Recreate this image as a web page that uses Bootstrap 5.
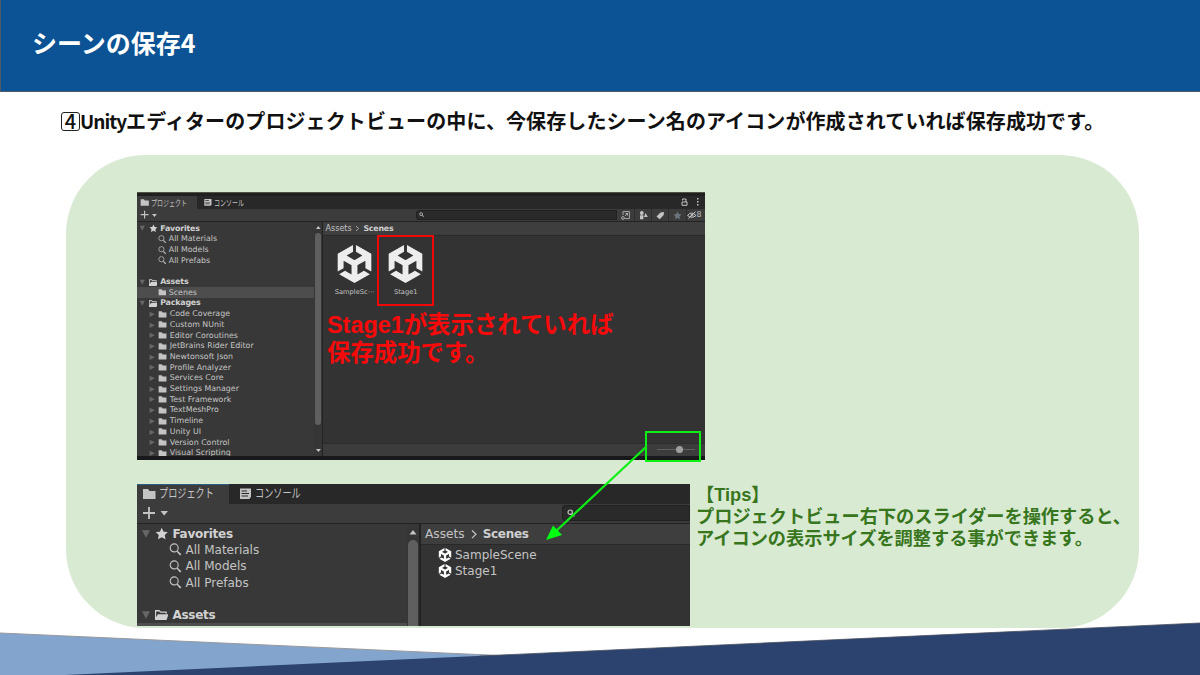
<!DOCTYPE html>
<html lang="ja">
<head>
<meta charset="utf-8">
<meta name="viewport" content="width=device-width, initial-scale=1">
<title>シーンの保存4</title>
<link rel="stylesheet" href="https://cdn.jsdelivr.net/npm/bootstrap@5.3.0/dist/css/bootstrap.min.css">
<style>
  body { width: 1200px; height: 675px; font-family: "Liberation Sans", "Noto Sans CJK JP", sans-serif; }
  svg { display: block; fill: currentColor; flex: none; }
  svg.hollow { fill: none; stroke: currentColor; }
  .topbar { height: 92px; background: #0b5394; border: 1px solid #4d5a68; border-width: 0 0 1px 1px; padding: 0 0 6px 31px; }
  .topbar h1 { font: 700 25px/1 "Noto Sans CJK JP", sans-serif; }
  .step { height: 63px; padding: 0 0 5px 61px; font: 700 20px/1 "Noto Sans CJK JP", sans-serif; letter-spacing: .1px; color: #111; white-space: nowrap; }
  .latin { font-size: 19px; letter-spacing: -1px; }
  .keynum { width: 19px; height: 19px; border: 1px solid #222; border-radius: 3px; font-size: 20px; line-height: 16px; font-weight: 500; }
  .panel { width: 1073px; height: 473px; margin-left: 66px; border-radius: 79px; background: #d9ead3; padding: 37px 0 0 71px; }
  .waves { left: 0; bottom: 0; }

  .editor { background: #383838; color: #c4c4c4; font: 400 calc(var(--u)*12)/1 "DejaVu Sans", "Noto Sans CJK JP", sans-serif; white-space: nowrap; flex: none; }
  .big-shot { --u: .656px; width: 568px; height: 268px; border-top: 1px solid #555046; border-bottom: 4px solid #19191b; padding-top: 3px; background: #202020; }
  .list-shot { --u: 1px; width: 553px; height: 142px; }
  .tabs { height: calc(var(--u)*19.5); background: #282828; flex: none; }
  .tabcell { height: 100%; padding-left: calc(var(--u)*5); gap: calc(var(--u)*2.5); border-top: 1px solid transparent; }
  .tabcell.on { width: calc(var(--u)*92); background: #3c3c3c; }
  .list-shot .tabcell.on { border-top-color: #2c5d87; }
  .tabcell.off { padding-left: calc(var(--u)*9); }
  .kana { display: inline-block; font-size: calc(var(--u)*12.5); transform: scaleX(.73); transform-origin: 0 50%; }
  .tools { height: calc(var(--u)*20.5); background: #3c3c3c; border-bottom: 1px solid #232323; flex: none; padding-left: calc(var(--u)*5); }
  .plus-wrap { width: calc(var(--u)*420); gap: calc(var(--u)*3); }
  .find { height: calc(var(--u)*16); background: #2a2a2a; border: 1px solid #212121; border-radius: 3px 0 0 3px; padding-left: calc(var(--u)*4); }
  .find svg { width: calc(var(--u)*8); height: calc(var(--u)*8); stroke-width: 2; }
  .big-shot .find { width: 201px; flex: none; }
  .toolcell { width: 17.2px; height: 100%; border-left: 1px solid #2d2d2d; }
  .tree { width: calc(var(--u)*270); flex: none; overflow: hidden; padding-top: calc(var(--u)*1.4); background: #383838; }
  .line { height: calc(var(--u)*16.33); flex: none; }
  .line.sel { background: #4d4d4d; }
  .line.root { padding-left: calc(var(--u)*3.5); font-weight: 700; font-size: calc(var(--u)*12); letter-spacing: calc(var(--u)*-.25); color: #d2d2d2; gap: calc(var(--u)*4.2); }
  .line.kid { padding-left: calc(var(--u)*31.5); gap: calc(var(--u)*4); }
  .line.pkg { padding-left: calc(var(--u)*18.5); gap: calc(var(--u)*4); }
  .fold { color: #676767; }
  .i10 { width: calc(var(--u)*10); height: calc(var(--u)*10); }
  .i14 { width: calc(var(--u)*14); height: calc(var(--u)*14); }
  .i13 { width: calc(var(--u)*13); height: calc(var(--u)*13); }
  .line.root .i13, .line.pkg .i13 { width: calc(var(--u)*13.5); height: calc(var(--u)*13.5); }
  .rail { width: calc(var(--u)*12); flex: none; background: #363636; padding: calc(var(--u)*3) 0 calc(var(--u)*4); gap: calc(var(--u)*3); }
  .thumb { width: calc(var(--u)*9.5); border-radius: calc(var(--u)*5); background: #5f5f5f; flex: 1 1 auto; }
  .big-shot .thumb { flex: 0 0 192px; margin-bottom: auto; }
  .list-shot .rail { padding-bottom: 0; }
  .list-shot .thumb { border-radius: 5px 5px 0 0; }
  .assets { background: #333; border-left: calc(var(--u)*2) solid #232323; }
  .crumb { height: calc(var(--u)*21); background: #3e3e3e; border-bottom: 1px solid #292929; padding-left: calc(var(--u)*4); gap: calc(var(--u)*4); font-size: calc(var(--u)*12.2); flex: none; }
  .crumb b { color: #d0d0d0; letter-spacing: calc(var(--u)*-.3); font-size: calc(var(--u)*12); }
  .tiles { padding: 9px 0 0 6px; }
  .tile { width: 51.2px; font-size: 6.7px; gap: 6px; }
  .tile svg { width: 39px; height: 38px; color: #ededed; }
  .zoombar { height: 13px; background: #3c3c3c; border-top: 1px solid #2c2c2c; padding: 0 10px 1px 0; }
  .track { width: 38px; height: 1px; background: #606060; }
  .knob { width: 7px; height: 7px; margin: -3px 0 0 19px; background: #a0a0a0; }
  .rows { padding: 2px 0 0 17px; font-size: 12px; }
  .rows .line { gap: 3px; }

  .redbox { left: 377px; top: 235px; width: 57px; height: 71px; border: 2px solid #f00808; }
  .redtext { left: 327px; top: 311px; font-weight: 700; font-size: 23.4px; line-height: 28px; color: #f80a0a; white-space: nowrap; }
  .greenbox { left: 645px; top: 431px; width: 56px; height: 31px; border: 2px solid #0cf014; }
  .arrow { left: 540px; top: 440px; }
  .tips { font-weight: 700; font-size: 18.2px; line-height: 22px; color: #38761d; padding-left: 6px; white-space: nowrap; }
</style>
</head>
<body class="bg-white overflow-hidden position-relative">
<svg width="0" height="0" class="position-absolute" aria-hidden="true">
  <symbol id="unity" viewBox="0 0 24 24"><path d="m12.9288 4.2939 3.7997 2.1929c.1366.077.1415.2905 0 .3675l-4.515 2.6076a.4192.4192 0 0 1-.4246 0L7.274 6.8543c-.139-.0745-.1415-.293 0-.3675l3.7972-2.193V0L1.3758 5.5977V16.793l3.7177-2.1456v-4.3858c-.0025-.1565.1813-.2682.318-.1838l4.5148 2.6076a.4252.4252 0 0 1 .2136.3676v5.2127c.0025.1565-.1813.2682-.3179.1838l-3.7996-2.1929-3.7178 2.1457L12 24l9.6954-5.5977-3.7178-2.1457-3.7996 2.1929c-.1341.082-.3229-.0248-.3179-.1838V13.053c0-.1565.087-.2956.2136-.3676l4.5149-2.6076c.134-.082.3228.0224.3179.1838v4.3858l3.7177 2.1456V5.5977L12.9288 0Z"/></symbol>
  <symbol id="folder" viewBox="0 0 14 14"><path d="M1 2h5l1.500 2H13.500V12H1z"/></symbol>
  <symbol id="open" viewBox="0 0 14 14"><path d="M0 12V2h4.600l1.300 1.500h6.300V6H11V5H5.400L4.200 3.500H1.200v6L3 6.500h11L12 12.500H0z"/></symbol>
  <symbol id="lens" viewBox="0 0 14 14"><circle cx="5.600" cy="5.300" r="4.300" fill="none" stroke="currentColor" stroke-width="1.200"/><path d="m8.300 9.300 1-1 4 3.700-1.400 1.400z"/></symbol>
  <symbol id="minilens" viewBox="0 0 8 8"><circle cx="3.200" cy="3.200" r="2.200" fill="none" stroke="currentColor" stroke-width="1.200"/><path d="m4.500 5.200.8-.7 2.500 2.500-.8.800z"/></symbol>
  <symbol id="star" viewBox="0 0 14 14"><path d="m7 .8 1.900 4 4.400.5-3.200 3 .8 4.400L7 10.500l-3.900 2.200.8-4.400-3.200-3 4.400-.5z"/></symbol>
  <symbol id="down" viewBox="0 0 10 10"><path d="M1 1.300h8L5 8.700z"/></symbol>
  <symbol id="right" viewBox="0 0 10 10"><path d="M1 1v8l8-4z"/></symbol>
  <symbol id="console" viewBox="0 0 14 14"><path d="M2 1.500h11v9h-1.200V12H2zM3.500 3.500v1H9v-1zm0 2.500v1H11V6zm0 2.500v1H10v-1z" fill-rule="evenodd"/></symbol>
  <symbol id="plus" viewBox="0 0 14 14"><path d="M6.100 1h1.800v5.100H13v1.800H7.900V13H6.100V7.900H1V6.100h5.100z"/></symbol>
  <symbol id="up" viewBox="0 0 10 10"><path d="M1.500 7.500h7L5 3z"/></symbol>
  <symbol id="caret" viewBox="0 0 10 10"><path d="M1.500 3h7.500L5.200 7.500z"/></symbol>
  <symbol id="gt" viewBox="0 0 10 10"><path d="m3 1.500 4 3.800-4 3.800" fill="none" stroke="currentColor" stroke-width="1.200"/></symbol>
</svg>

<header class="topbar d-flex align-items-center text-white"><h1 class="m-0">シーンの保存4</h1></header>
<p class="step d-flex align-items-center m-0"><span class="keynum d-inline-flex justify-content-center">4</span><span><span class="latin">Unity</span>エディターのプロジェクトビューの中に、今保存したシーン名のアイコンが作成されていれば保存成功です。</span></p>

<main class="panel">
  <section class="editor big-shot d-flex flex-column">
    <div class="tabs d-flex">
      <div class="tabcell on d-flex align-items-center"><svg class="i14"><use href="#folder"/></svg><span class="kana">プロジェクト</span></div>
      <div class="tabcell off d-flex align-items-center"><svg class="i14"><use href="#console"/></svg><span class="kana">コンソール</span></div>
      <div class="ms-auto d-flex align-items-center gap-2 pe-1">
        <svg class="hollow" width="7" height="8" viewBox="0 0 7 8"><path d="M1 4h5v3.300H1zM1.500 2.500V1H5v3"/></svg>
        <svg width="5" height="8" viewBox="0 0 5 8"><path d="M1 0h1.500v1.500H1zm0 3h1.500v1.500H1zm0 3h1.500v1.500H1z"/></svg>
      </div>
    </div>
    <div class="tools d-flex align-items-center">
      <div class="plus-wrap d-flex align-items-center"><svg class="i14"><use href="#plus"/></svg><svg class="i10"><use href="#caret"/></svg></div>
      <div class="find d-flex align-items-center"><svg><use href="#minilens"/></svg></div>
      <div class="toolcell d-flex align-items-center justify-content-center border-0"><svg class="hollow" width="9" height="9" viewBox="0 0 9 9" stroke-width=".8"><path d="M2 4V.6h6.400v7H4M6.500 2.500 4 5M4.500 2.500h2v2"/><circle cx="2" cy="7" r="1.400"/></svg></div>
      <div class="toolcell d-flex align-items-center justify-content-center"><svg width="9" height="9" viewBox="0 0 9 9"><circle cx="2.800" cy="2" r="1.900"/><path d="M1 4.300h3.400v4H1zM6.500 2l2.300 4H5z"/></svg></div>
      <div class="toolcell d-flex align-items-center justify-content-center"><svg width="9" height="9" viewBox="0 0 9 9"><path d="m.5 5.500 4-4L8 1l-.3 3-4 4.300z"/></svg></div>
      <div class="toolcell d-flex align-items-center justify-content-center text-secondary"><svg width="9" height="9"><use href="#star"/></svg></div>
      <div class="toolcell d-flex align-items-center flex-fill"><svg class="hollow" width="10" height="8" viewBox="0 0 10 8"><path d="M.5 4.500Q4.500-.5 9 4.500 5 8 .5 4.500M1.500 7.500 8.500.5"/><circle cx="5" cy="4" r="1"/></svg><span>8</span></div>
    </div>
    <div class="d-flex flex-fill overflow-hidden">
      <div class="tree d-flex flex-column">
        <div class="line root d-flex align-items-center"><svg class="fold i10"><use href="#down"/></svg><svg class="i13"><use href="#star"/></svg><span>Favorites</span></div>
        <div class="line kid d-flex align-items-center"><svg class="i13"><use href="#lens"/></svg>All Materials</div>
        <div class="line kid d-flex align-items-center"><svg class="i13"><use href="#lens"/></svg>All Models</div>
        <div class="line kid d-flex align-items-center"><svg class="i13"><use href="#lens"/></svg>All Prefabs</div>
        <div class="line"></div>
        <div class="line root d-flex align-items-center"><svg class="fold i10"><use href="#down"/></svg><svg class="i13"><use href="#open"/></svg><span>Assets</span></div>
        <div class="line kid sel d-flex align-items-center"><svg class="i13"><use href="#folder"/></svg>Scenes</div>
        <div class="line root d-flex align-items-center"><svg class="fold i10"><use href="#down"/></svg><svg class="i13"><use href="#open"/></svg><span>Packages</span></div>
        <div class="line pkg d-flex align-items-center"><svg class="fold i10"><use href="#right"/></svg><svg class="i13"><use href="#folder"/></svg>Code Coverage</div>
        <div class="line pkg d-flex align-items-center"><svg class="fold i10"><use href="#right"/></svg><svg class="i13"><use href="#folder"/></svg>Custom NUnit</div>
        <div class="line pkg d-flex align-items-center"><svg class="fold i10"><use href="#right"/></svg><svg class="i13"><use href="#folder"/></svg>Editor Coroutines</div>
        <div class="line pkg d-flex align-items-center"><svg class="fold i10"><use href="#right"/></svg><svg class="i13"><use href="#folder"/></svg>JetBrains Rider Editor</div>
        <div class="line pkg d-flex align-items-center"><svg class="fold i10"><use href="#right"/></svg><svg class="i13"><use href="#folder"/></svg>Newtonsoft Json</div>
        <div class="line pkg d-flex align-items-center"><svg class="fold i10"><use href="#right"/></svg><svg class="i13"><use href="#folder"/></svg>Profile Analyzer</div>
        <div class="line pkg d-flex align-items-center"><svg class="fold i10"><use href="#right"/></svg><svg class="i13"><use href="#folder"/></svg>Services Core</div>
        <div class="line pkg d-flex align-items-center"><svg class="fold i10"><use href="#right"/></svg><svg class="i13"><use href="#folder"/></svg>Settings Manager</div>
        <div class="line pkg d-flex align-items-center"><svg class="fold i10"><use href="#right"/></svg><svg class="i13"><use href="#folder"/></svg>Test Framework</div>
        <div class="line pkg d-flex align-items-center"><svg class="fold i10"><use href="#right"/></svg><svg class="i13"><use href="#folder"/></svg>TextMeshPro</div>
        <div class="line pkg d-flex align-items-center"><svg class="fold i10"><use href="#right"/></svg><svg class="i13"><use href="#folder"/></svg>Timeline</div>
        <div class="line pkg d-flex align-items-center"><svg class="fold i10"><use href="#right"/></svg><svg class="i13"><use href="#folder"/></svg>Unity UI</div>
        <div class="line pkg d-flex align-items-center"><svg class="fold i10"><use href="#right"/></svg><svg class="i13"><use href="#folder"/></svg>Version Control</div>
        <div class="line pkg d-flex align-items-center"><svg class="fold i10"><use href="#right"/></svg><svg class="i13"><use href="#folder"/></svg>Visual Scripting</div>
      </div>
      <div class="rail d-flex flex-column align-items-center"><svg class="i10"><use href="#up"/></svg><div class="thumb"></div><svg class="i10"><use href="#caret"/></svg></div>
      <div class="assets flex-fill d-flex flex-column">
        <div class="crumb d-flex align-items-center"><span>Assets</span><svg class="i10"><use href="#gt"/></svg><b>Scenes</b></div>
        <div class="tiles d-flex flex-fill">
          <div class="tile d-flex flex-column align-items-center"><svg><use href="#unity"/></svg><span>SampleSc⋯</span></div>
          <div class="tile d-flex flex-column align-items-center"><svg><use href="#unity"/></svg><span>Stage1</span></div>
        </div>
        <div class="zoombar d-flex align-items-center justify-content-end"><div class="track"><div class="knob rounded-circle"></div></div></div>
      </div>
    </div>
  </section>

  <div class="d-flex mt-4">
    <section class="editor list-shot d-flex flex-column overflow-hidden">
      <div class="tabs d-flex">
        <div class="tabcell on d-flex align-items-center"><svg class="i14"><use href="#folder"/></svg><span class="kana">プロジェクト</span></div>
        <div class="tabcell off d-flex align-items-center"><svg class="i14"><use href="#console"/></svg><span class="kana">コンソール</span></div>
      </div>
      <div class="tools d-flex align-items-center">
        <div class="plus-wrap d-flex align-items-center"><svg class="i14"><use href="#plus"/></svg><svg class="i10"><use href="#caret"/></svg></div>
        <div class="find flex-fill d-flex align-items-center"><svg><use href="#minilens"/></svg></div>
      </div>
      <div class="d-flex flex-fill overflow-hidden">
        <div class="tree d-flex flex-column">
          <div class="line root d-flex align-items-center"><svg class="fold i10"><use href="#down"/></svg><svg class="i13"><use href="#star"/></svg><span>Favorites</span></div>
          <div class="line kid d-flex align-items-center"><svg class="i13"><use href="#lens"/></svg>All Materials</div>
          <div class="line kid d-flex align-items-center"><svg class="i13"><use href="#lens"/></svg>All Models</div>
          <div class="line kid d-flex align-items-center"><svg class="i13"><use href="#lens"/></svg>All Prefabs</div>
          <div class="line"></div>
          <div class="line root d-flex align-items-center"><svg class="fold i10"><use href="#down"/></svg><svg class="i13"><use href="#open"/></svg><span>Assets</span></div>
          <div class="line kid sel d-flex align-items-center"><svg class="i13"><use href="#folder"/></svg></div>
        </div>
        <div class="rail d-flex flex-column align-items-center"><svg class="i10"><use href="#up"/></svg><div class="thumb"></div></div>
        <div class="assets flex-fill">
          <div class="crumb d-flex align-items-center"><span>Assets</span><svg class="i10"><use href="#gt"/></svg><b>Scenes</b></div>
          <div class="rows">
            <div class="line d-flex align-items-center"><svg class="i14 text-white"><use href="#unity"/></svg>SampleScene</div>
            <div class="line d-flex align-items-center"><svg class="i14 text-white"><use href="#unity"/></svg>Stage1</div>
          </div>
        </div>
      </div>
    </section>
    <p class="tips m-0">【Tips】<br>プロジェクトビュー右下のスライダーを操作すると、<br>アイコンの表示サイズを調整する事ができます。</p>
  </div>
</main>

<div class="redbox position-absolute"></div>
<div class="redtext position-absolute">Stage1が表示されていれば<br>保存成功です。</div>
<div class="greenbox position-absolute"></div>
<svg class="arrow position-absolute" width="110" height="105" viewBox="540 440 110 105"><path d="M646 447 555 532" stroke="#0cf014" stroke-width="2.200"/><path d="m546 540 7-14.500 9 9.500z" fill="#00ff10"/></svg>

<svg class="waves position-absolute" width="1200" height="55" viewBox="0 620 1200 55">
  <path d="M0 633 500 655.500 H520 V675H0z" fill="#82a4cd"/><path d="M0 633 500 655.500" stroke="#98999c" stroke-width="1"/>
  <path d="M65 675 1200 623V675z" fill="#2b436e"/><path d="M480 656 1200 623" stroke="#4a5260" stroke-width=".8"/>
</svg>
<script src="https://cdn.jsdelivr.net/npm/bootstrap@5.3.0/dist/js/bootstrap.bundle.min.js"></script>
</body>
</html>
